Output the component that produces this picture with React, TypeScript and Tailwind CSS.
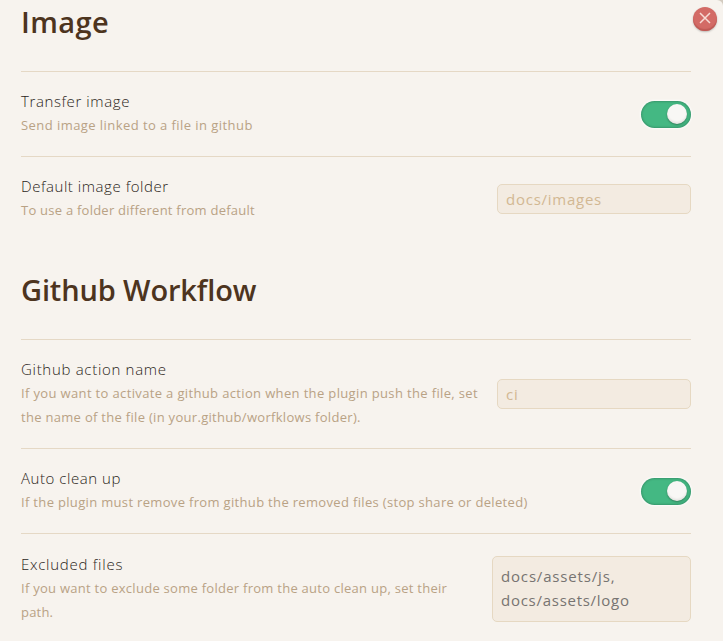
import type { ReactNode } from "react";

const close = (
  <button
    aria-label="Close"
    className="absolute left-[693px] top-[7px] flex h-6 w-6 items-center justify-center rounded-full bg-[#d36b66] shadow-[inset_0_-2px_1px_#bf5a55,0_1px_2px_#00000040]"
  >
    <svg width="12" height="12" viewBox="0 0 12 12" className="mb-0.5" fill="none" stroke="#f7dcd6" strokeWidth="1.5">
      <path d="M1 1 11 11M11 1 1 11" />
    </svg>
  </button>
);

function Toggle() {
  return (
    <div className="flex h-[27px] w-[50px] shrink-0 justify-end rounded-full bg-[#44b883] pr-1 pt-[3px] shadow-[inset_0_0_2px_1px_#0000002e,0_0_2px_1px_#ffffffc0]">
      <div className="h-5 w-5 rounded-full bg-[#f8f7f5] shadow-[inset_0_-2px_2px_#00000012,0_1px_2px_#00000050]" />
    </div>
  );
}

function Field({ text }: { text: string }) {
  return (
    <div className="flex h-[30px] w-[194px] shrink-0 items-center rounded-[5px] border border-[#e6d8c2] bg-[#f3ebe1] px-2 text-[15px] tracking-[0.75px] text-[#d2b893]">
      {text}
    </div>
  );
}

function Row({ title, lines, children }: { title: ReactNode; lines: ReactNode[]; children: ReactNode }) {
  return (
    <div className="flex items-center justify-between border-t border-[#e5d8c5] py-[18px]">
      <div className="-mt-px mb-px whitespace-nowrap leading-6">
        <div className="text-[15px] font-light text-[#2b2520]">{title}</div>
        {lines.map((line, i) => (
          <div key={i} className="text-[13px] text-[#b9a285]">{line}</div>
        ))}
      </div>
      {children}
    </div>
  );
}

export default function App() {
  return (
    <main className="relative h-[641px] w-[723px] overflow-hidden bg-[#d3cbc0] font-['Open_Sans',sans-serif]">
      <div className="h-full rounded-tr-[6px] bg-[#f7f3ee] pl-[21px] pr-8">
        <h2 className="h-[71px] pt-[3px] text-[29px] font-semibold leading-[38px] text-[#4d341e]">
          <span className="tracking-[0.4px]">Image</span>
        </h2>
        <Row title={<span className="tracking-[0.6px]">Transfer image</span>} lines={[<span className="tracking-[0.44px]">Send image linked to a file in github</span>]}>
          <Toggle />
        </Row>
        <Row title={<span className="tracking-[0.55px]">Default image folder</span>} lines={[<span className="tracking-[0.24px]">To use a folder different from default</span>]}>
          <Field text="docs/images" />
        </Row>
        <h2 className="h-[98px] pt-[30px] text-[29px] font-semibold leading-[38px] text-[#4d341e]">
          <span className="tracking-[-0.13px]">Github Workflow</span>
        </h2>
        <Row
          title={<span className="tracking-[0.7px]">Github action name</span>}
          lines={[
            <span className="tracking-[0.355px]">If you want to activate a github action when the plugin push the file, set</span>,
            <span className="tracking-[0.3px]">the name of the file (in your.github/worfklows folder).</span>,
          ]}
        >
          <Field text="ci" />
        </Row>
        <Row title={<span className="tracking-[0.55px]">Auto clean up</span>} lines={[<span className="tracking-[0.33px]">If the plugin must remove from github the removed files (stop share or deleted)</span>]}>
          <Toggle />
        </Row>
        <div className="[&>div]:pt-[19px]">
          <Row
            title={<span className="tracking-[0.75px]">Excluded files</span>}
            lines={[
              <span className="tracking-[0.27px]">If you want to exclude some folder from the auto clean up, set their</span>,
              <span className="tracking-[0.2px]">path.</span>,
            ]}
          >
            <div className="h-[66px] w-[199px] shrink-0 rounded-[5px] border border-[#e6d8c2] bg-[#f3ebe1] px-2 py-[7px] text-[15px] leading-6 text-[#777471]">
              <div className="tracking-[0.83px]">docs/assets/js,</div>
              <div className="tracking-[0.73px]">docs/assets/logo</div>
            </div>
          </Row>
        </div>
      </div>
      {close}
    </main>
  );
}
